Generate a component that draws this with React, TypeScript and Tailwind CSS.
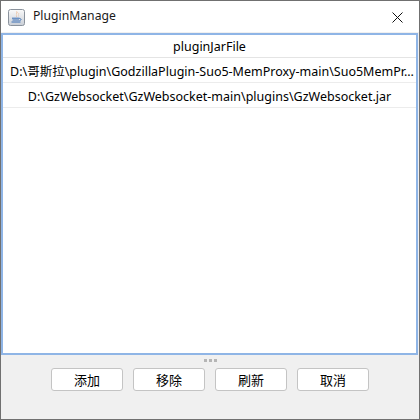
import React from "react";

const font = { fontFamily: '"Noto Sans", "Noto Sans CJK SC", sans-serif' };

function JavaIcon() {
  return (
    <svg width="17" height="17" viewBox="0 0 17 17">
      <defs>
        <linearGradient id="g" x1="0" y1="0" x2="0" y2="1">
          <stop offset="0" stopColor="#fafafa" />
          <stop offset="1" stopColor="#c9ced6" />
        </linearGradient>
      </defs>
      <rect x="0.5" y="0.5" width="16" height="16" rx="2" fill="url(#g)" stroke="#8a929c" />
      <path d="M8.5 2 C11 4 6.8 5.5 8.8 8 C6.6 6.6 9.8 5 8.5 2 Z" fill="#e8741c" />
      <path d="M10.8 3.8 C12 5 9.6 6 10.4 7.8 C9.2 6.6 11.3 5.5 10.8 3.8 Z" fill="#e8741c" />
      <path d="M4 9.2 H11.5" stroke="#3b6fb5" strokeWidth="1" />
      <path d="M4.5 11 H11" stroke="#3b6fb5" strokeWidth="1" />
      <path d="M11.5 9.5 C13.5 9.5 13.5 11.5 11.5 11.5" stroke="#3b6fb5" strokeWidth="1" fill="none" />
      <path d="M3.5 13 H12.5" stroke="#3b6fb5" strokeWidth="1" />
    </svg>
  );
}

export default function App() {
  return (
    <div className="w-[420px] h-[420px] flex flex-col border border-[#707070] bg-[#f0f0f0] text-black" style={font}>
      <div className="h-[31px] shrink-0 bg-white flex items-center">
        <div className="ml-[7px] mt-[1px] flex items-center">
          <JavaIcon />
        </div>
        <span className="ml-[8px] text-[12.2px] leading-none text-[#1a1a1a]">PluginManage</span>
        <div className="ml-auto mr-[16px] mt-[1px]">
          <svg width="11" height="11" viewBox="0 0 11 11">
            <path d="M0.5 0.5 L10.5 10.5 M10.5 0.5 L0.5 10.5" stroke="#111" strokeWidth="1" />
          </svg>
        </div>
      </div>
      <div className="mt-[1px] mr-[1px] h-[322px] shrink-0 border-2 border-[#8fb5e6] bg-white flex flex-col">
        <div className="h-[23px] shrink-0 border-b border-[#e4e4e4] flex items-center justify-center text-[12.5px] pt-[3px]">
          pluginJarFile
        </div>
        <div className="h-[25px] shrink-0 border-b border-[#ececec] pl-[7px] pt-[4px] flex items-center text-[12.5px] whitespace-nowrap">
          D:\哥斯拉\plugin\GodzillaPlugin-Suo5-MemProxy-main\Suo5MemPr...
        </div>
        <div className="h-[25px] shrink-0 border-b border-[#ececec] pt-[4px] flex items-center justify-center text-[12.5px] whitespace-nowrap">
          D:\GzWebsocket\GzWebsocket-main\plugins\GzWebsocket.jar
        </div>
      </div>
      <div className="h-[10px] flex items-center justify-center gap-[2px]">
        <span className="w-[3px] h-[3px] bg-[#b5b5b5]" />
        <span className="w-[3px] h-[3px] bg-[#b5b5b5]" />
        <span className="w-[3px] h-[3px] bg-[#b5b5b5]" />
      </div>
      <div className="mt-[3px] flex justify-center gap-[10px]">
        {["添加", "移除", "刷新", "取消"].map((t) => (
          <button
            key={t}
            className="w-[72px] h-[23px] bg-white border border-[#c4c4c4] rounded-[3px] text-[13px] leading-none flex items-center justify-center"
            style={{ fontFamily: '"Noto Sans CJK SC", sans-serif' }}
          >
            {t}
          </button>
        ))}
      </div>
    </div>
  );
}
